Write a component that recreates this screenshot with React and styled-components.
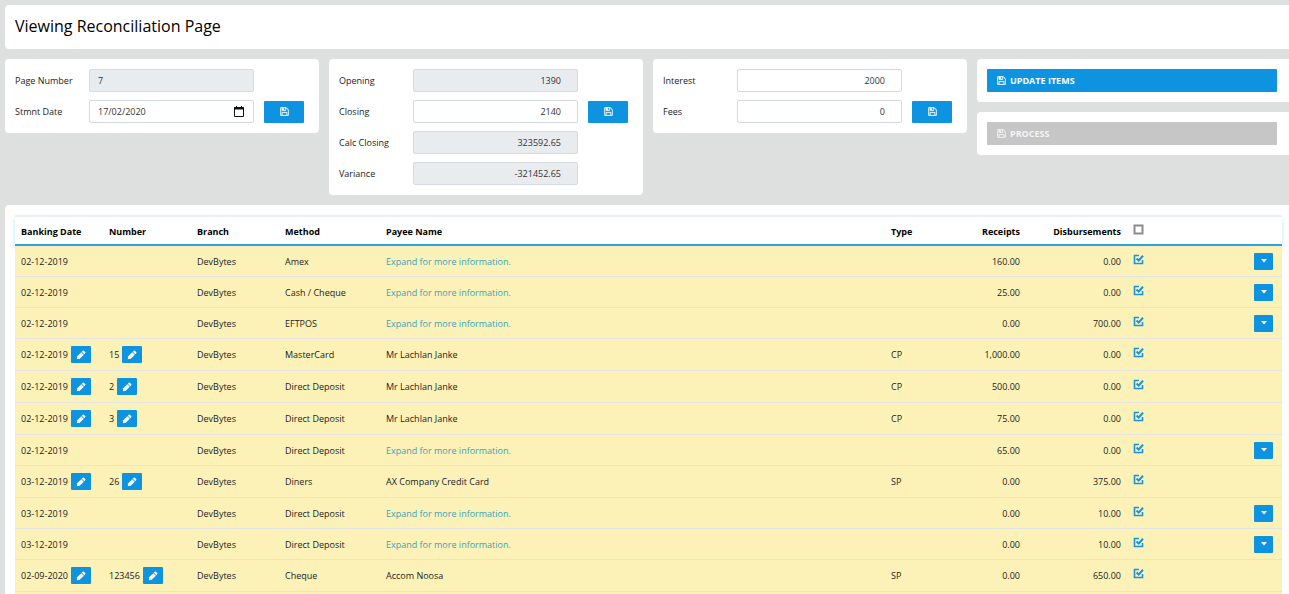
import React, { useState } from 'react'
import styled, { createGlobalStyle } from 'styled-components'

const GlobalStyle = createGlobalStyle`
	* {
		box-sizing: border-box;
	}

	body {
		margin: 0;
		background: #dee0df;
		color: #222;
		font-family: 'Open Sans', 'Noto Sans', sans-serif;
		font-size: 9px;
		line-height: 15px;
		overflow-x: hidden;
		scrollbar-width: none;
	}

	button, input {
		font: inherit;
	}
`

const Page = styled.main`
	display: flex;
	flex-direction: column;
	gap: 10px;
	padding: 5px 0 0 5px;
`

const Card = styled.section`
	background: #fff;
	border-radius: ${props => (props.$flush ? '4px 0 0 4px' : '4px')};
	padding: 10px;
`

const Header = styled(Card)`
	padding: 9px 10px 11px;
`

const Title = styled.h1`
	margin: 0;
	color: #000;
	font-size: 16px;
	font-weight: 500;
	line-height: 24px;
`

const Panels = styled.div`
	display: grid;
	grid-template-columns: repeat(3, minmax(0, 314fr)) minmax(0, 312fr);
	column-gap: 10px;
	align-items: start;
`

const Fields = styled(Card)`
	display: flex;
	flex-direction: column;
	gap: 8px;
`

const Field = styled.div`
	display: grid;
	grid-template-columns: 64px minmax(0, 1fr) 45px;
	column-gap: 10px;
	align-items: center;

	label {
		white-space: nowrap;
	}
`

const InputWrap = styled.div`
	display: flex;
	align-items: center;
	height: 23px;
	padding-right: ${props => (props.$date ? '9px' : '0')};
	border: 1px solid #d6dbe1;
	border-radius: 2px;
	background: ${props => (props.$readOnly ? '#e9ecef' : '#fff')};
`

const Input = styled.input`
	flex: 1;
	min-width: 0;
	padding: 0 ${props => (props.$right ? '16px' : '8px')} 0 8px;
	border: none;
	outline: none;
	background: transparent;
	color: #333;
	text-align: ${props => (props.$right ? 'right' : 'left')};
`

const PickDate = styled.button`
	display: flex;
	padding: 0;
	border: none;
	background: none;
	color: #111;
`

const Save = styled.button`
	display: flex;
	align-items: center;
	justify-content: center;
	width: 40px;
	height: 22px;
	padding: 0;
	border: none;
	border-radius: 1px;
	background: #0e93e0;
	color: #fff;
`

const Actions = styled.div`
	display: flex;
	flex-direction: column;
	gap: 10px;
`

const ActionCard = styled(Card)`
	padding: 10px 12px 10px 10px;
`

const Action = styled.button`
	display: flex;
	align-items: center;
	gap: 4px;
	width: 100%;
	height: 23px;
	padding: 0 10px;
	border: none;
	border-radius: 1px;
	background: ${props => (props.disabled ? '#c6c6c6' : '#0e93e0')};
	color: ${props => (props.disabled ? '#f4f4f4' : '#fff')};
	font-weight: 700;
`

const TableCard = styled(Card)`
	padding: 10px 7px 10px 10px;
`

const Table = styled.table`
	width: 100%;
	table-layout: fixed;
	border-collapse: separate;
	border-spacing: 0;
`

const Col = styled.col`
	width: ${props => props.$width};
`

const Head = styled.thead`
	box-shadow: 0 3px 4px rgba(14, 147, 224, 0.25);
`

const Th = styled.th`
	height: 31px;
	padding: 2px 6px 0;
	border-top: 2px solid #eef1f4;
	border-bottom: 2px solid #2ba3e2;
	background: #fff;
	color: #000;
	font-weight: 700;
	text-align: ${props => (props.$right ? 'right' : 'left')};
`

const Td = styled.td`
	height: 31px;
	padding: 0 6px;
	border-bottom: 1px solid #e1e4e2;
	background: #fcf2b8;
	color: #222;
	text-align: ${props => (props.$right ? 'right' : 'left')};
	white-space: nowrap;
`

const Editable = styled.div`
	display: flex;
	align-items: center;
	gap: 3px;
	padding: 7px 0;
	line-height: 15px;
`

const Edit = styled.button`
	display: flex;
	align-items: center;
	justify-content: center;
	width: 20px;
	height: 17px;
	padding: 0;
	border: none;
	border-radius: 1px;
	background: #0e93e0;
	color: #fff;
`

const Expand = styled(Edit)`
	width: 19px;
	margin-left: auto;
	margin-right: 3px;
`

const More = styled.a`
	color: #3aa3b8;
	text-decoration: none;
`

const Tick = styled.label`
	position: relative;
	display: block;
	width: 11px;
	height: 11px;
	margin-bottom: 4px;
	color: ${props => (props.$checked ? '#1b93dd' : '#8c8c8c')};

	input {
		position: absolute;
		inset: 0;
		width: 100%;
		height: 100%;
		margin: 0;
		opacity: 0;
	}

	svg {
		display: block;
	}
`

const SaveIcon = () => (
	<svg
		width="9"
		height="9"
		viewBox="64 64 1664 1664"
		fill="currentColor"
		stroke="currentColor"
		strokeWidth="40"
		aria-hidden="true"
	>
		<path d="M512 1536h768v-384h-768v384zm896 0h128v-896q0-14-10-38.500t-20-34.500l-281-281q-10-10-34-20t-39-10v416q0 40-28 68t-68 28h-576q-40 0-68-28t-28-68v-416h-128v1280h128v-416q0-40 28-68t68-28h832q40 0 68 28t28 68v416zm-384-928v-320q0-13-9.500-22.500t-22.500-9.500h-192q-13 0-22.500 9.500t-9.500 22.500v320q0 13 9.500 22.500t22.500 9.500h192q13 0 22.500-9.500t9.500-22.500zm640 32v928q0 40-28 68t-68 28h-1344q-40 0-68-28t-28-68v-1344q0-40 28-68t68-28h928q40 0 88 20t76 48l280 280q28 28 48 76t20 88z" />
	</svg>
)

const PencilIcon = () => (
	<svg width="10" height="10" viewBox="0 0 10 10" fill="currentColor" aria-hidden="true">
		<path d="M.8 9.200L1.200 6.300L5.300 2.200L7.800 4.700L3.700 8.800Z" />
		<path d="M5.800 1.700L6.700 .8Q7.300 .3 7.900 .8L9.200 2.100Q9.700 2.700 9.200 3.300L8.300 4.200Z" />
	</svg>
)

const CaretIcon = () => (
	<svg width="6" height="4" viewBox="0 0 6 4" fill="currentColor" aria-hidden="true">
		<path d="M0 0H6L3 3.500Z" />
	</svg>
)

const CalendarIcon = () => (
	<svg width="10" height="11" viewBox="0 0 10 11" fill="none" stroke="currentColor" aria-hidden="true">
		<path d="M.5 1.500H9.500V10.500H.5Z" />
		<path d="M0 2.500H10" strokeWidth="2" />
		<path d="M2.500 0V2M7.500 0V2" />
	</svg>
)

const TickIcon = ({ checked }) => (
	<svg width="11" height="11" viewBox="0 0 11 11" fill="none" stroke="currentColor" aria-hidden="true">
		{checked ? (
			<>
				<path d="M6 1.500H1.500V9.500H9.500V6" strokeWidth="1.600" />
				<path d="M3.500 4.500L5.700 6.500L10 1.800" strokeWidth="2" />
			</>
		) : (
			<path d="M1.500 1.500H9.500V9.500H1.500Z" strokeWidth="2" />
		)}
	</svg>
)

const panels = [
	[
		{ id: 'page', label: 'Page Number', value: '7', readOnly: true, left: true },
		{ id: 'date', label: 'Stmnt Date', value: '17/02/2020', left: true, date: true, save: true }
	],
	[
		{ id: 'opening', label: 'Opening', value: '1390', readOnly: true },
		{ id: 'closing', label: 'Closing', value: '2140', save: true },
		{ id: 'calc', label: 'Calc Closing', value: '323592.65', readOnly: true },
		{ id: 'variance', label: 'Variance', value: '-321452.65', readOnly: true }
	],
	[
		{ id: 'interest', label: 'Interest', value: '2000' },
		{ id: 'fees', label: 'Fees', value: '0', save: true }
	]
]

// date, number, method, payee, type, receipts, disbursements
const rows = [
	['02-12-2019', '', 'Amex', '', '', '160.00', '0.00'],
	['02-12-2019', '', 'Cash / Cheque', '', '', '25.00', '0.00'],
	['02-12-2019', '', 'EFTPOS', '', '', '0.00', '700.00'],
	['02-12-2019', '15', 'MasterCard', 'Mr Lachlan Janke', 'CP', '1,000.00', '0.00'],
	['02-12-2019', '2', 'Direct Deposit', 'Mr Lachlan Janke', 'CP', '500.00', '0.00'],
	['02-12-2019', '3', 'Direct Deposit', 'Mr Lachlan Janke', 'CP', '75.00', '0.00'],
	['02-12-2019', '', 'Direct Deposit', '', '', '65.00', '0.00'],
	['03-12-2019', '26', 'Diners', 'AX Company Credit Card', 'SP', '0.00', '375.00'],
	['03-12-2019', '', 'Direct Deposit', '', '', '0.00', '10.00'],
	['03-12-2019', '', 'Direct Deposit', '', '', '0.00', '10.00'],
	['02-09-2020', '123456', 'Cheque', 'Accom Noosa', 'SP', '0.00', '650.00'],
	['', '', '', '', '', '', '']
]

const widths = ['88px', '88px', '88px', '101px', 'auto', '60px', '81px', '101px', '30px', '125px']

const FormField = ({ id, label, value, readOnly, left, date, save }) => (
	<Field>
		<label htmlFor={id}>{label}</label>
		<InputWrap $readOnly={readOnly} $date={date}>
			<Input id={id} defaultValue={value} readOnly={readOnly} $right={!left} />
			{date && (
				<PickDate aria-label="Pick date">
					<CalendarIcon />
				</PickDate>
			)}
		</InputWrap>
		{save && (
			<Save aria-label={`Save ${label}`}>
				<SaveIcon />
			</Save>
		)}
	</Field>
)

const Checkbox = ({ initial, label }) => {
	const [checked, setChecked] = useState(initial)
	return (
		<Tick $checked={checked}>
			<input type="checkbox" aria-label={label} checked={checked} onChange={e => setChecked(e.target.checked)} />
			<TickIcon checked={checked} />
		</Tick>
	)
}

const EditableText = ({ children, label }) => (
	<Editable>
		{children}
		<Edit aria-label={label}>
			<PencilIcon />
		</Edit>
	</Editable>
)

const Row = ({ row }) => {
	const [date, number, method, payee, type, receipts, disbursements] = row
	if (!date) {
		return (
			<tr>
				<Td colSpan={10} />
			</tr>
		)
	}
	return (
		<tr>
			<Td>{number ? <EditableText label="Edit date">{date}</EditableText> : date}</Td>
			<Td>{number && <EditableText label="Edit number">{number}</EditableText>}</Td>
			<Td>DevBytes</Td>
			<Td>{method}</Td>
			<Td>{payee || <More href="#expand">Expand for more information.</More>}</Td>
			<Td>{type}</Td>
			<Td $right>{receipts}</Td>
			<Td $right>{disbursements}</Td>
			<Td>
				<Checkbox initial label="Select item" />
			</Td>
			<Td>
				{!payee && (
					<Expand aria-label="Expand">
						<CaretIcon />
					</Expand>
				)}
			</Td>
		</tr>
	)
}

const App = () => (
	<>
		<GlobalStyle />
		<Page>
			<Header $flush>
				<Title>Viewing Reconciliation Page</Title>
			</Header>
			<Panels>
				{panels.map(fields => (
					<Fields key={fields[0].id}>
						{fields.map(field => (
							<FormField key={field.id} {...field} />
						))}
					</Fields>
				))}
				<Actions>
					<ActionCard $flush>
						<Action>
							<SaveIcon /> UPDATE ITEMS
						</Action>
					</ActionCard>
					<ActionCard $flush>
						<Action disabled>
							<SaveIcon /> PROCESS
						</Action>
					</ActionCard>
				</Actions>
			</Panels>
			<TableCard $flush>
				<Table>
					<colgroup>
						{widths.map((width, i) => (
							<Col key={i} $width={width} />
						))}
					</colgroup>
					<Head>
						<tr>
							<Th>Banking Date</Th>
							<Th>Number</Th>
							<Th>Branch</Th>
							<Th>Method</Th>
							<Th>Payee Name</Th>
							<Th>Type</Th>
							<Th $right>Receipts</Th>
							<Th $right>Disbursements</Th>
							<Th>
								<Checkbox initial={false} label="Select all" />
							</Th>
							<Th />
						</tr>
					</Head>
					<tbody>
						{rows.map((row, i) => (
							<Row key={i} row={row} />
						))}
					</tbody>
				</Table>
			</TableCard>
		</Page>
	</>
)

export default App
